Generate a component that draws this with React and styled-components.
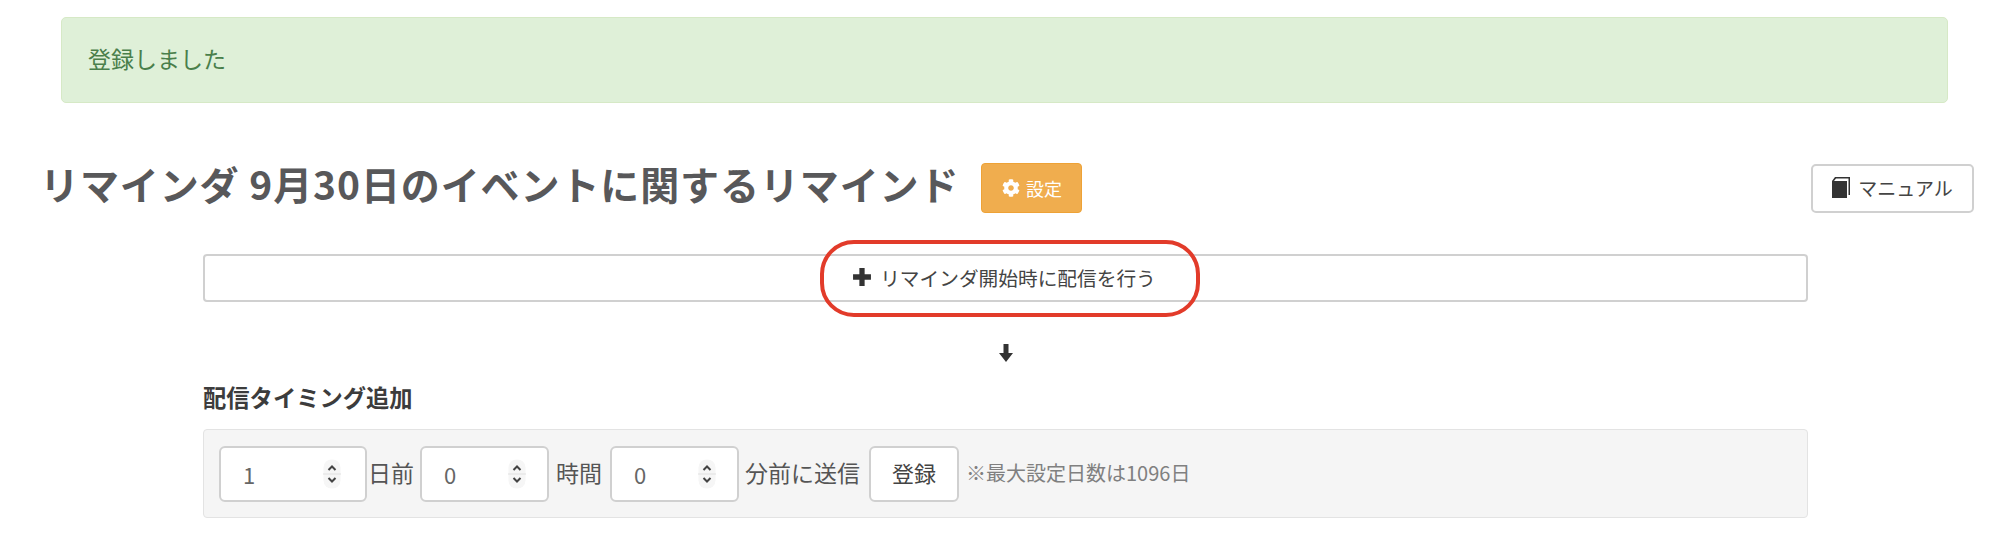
import styled, { createGlobalStyle } from 'styled-components'
import { FaCog } from 'react-icons/fa'

const GlobalStyle = createGlobalStyle`
  html, body {
    margin: 0;
    background: #fff;
  }
  body {
    font-family: "Noto Sans CJK JP", "Noto Sans", sans-serif;
    color: #333;
  }
`

const Page = styled.div`
  width: 1999px;
  height: 551px;
  overflow: hidden;
  box-sizing: border-box;
  padding: 17px 25px 0 40px;
`

const Alert = styled.div`
  box-sizing: border-box;
  height: 86px;
  margin: 0 26px 0 21px;
  padding: 0 26px 4px;
  display: flex;
  align-items: center;
  background: #dff0d8;
  border: 1px solid #d6e9c6;
  border-radius: 5px;
  color: #4a7f4b;
  font-size: 23px;
`

const TitleRow = styled.div`
  display: flex;
  align-items: center;
  height: 50px;
  margin-top: 60px;
`

const Title = styled.h1`
  margin: 0 0 10px;
  font-size: 39px;
  line-height: 50px;
  font-weight: 700;
  color: #58585a;
  white-space: nowrap;
  letter-spacing: 0.9px;
`

const SettingsButton = styled.button`
  box-sizing: border-box;
  width: 101px;
  height: 50px;
  margin-left: 22px;
  padding-bottom: 2px;
  display: flex;
  align-items: center;
  justify-content: center;
  gap: 6px;
  background: #f0ad4e;
  border: 1px solid #eea236;
  border-radius: 4px;
  color: #fff;
  font: inherit;
  font-size: 18px;
`

const ManualButton = styled.button`
  box-sizing: border-box;
  width: 163px;
  height: 49px;
  margin-left: auto;
  padding-bottom: 2px;
  display: flex;
  align-items: center;
  justify-content: center;
  gap: 7px;
  background: #fff;
  border: 2px solid #d0d0d0;
  border-radius: 5px;
  color: #444;
  font: inherit;
  font-size: 19px;
  line-height: 1;
`

const Content = styled.div`
  width: 1605px;
  margin: 41px 0 0 163px;
`

const StartRow = styled.div`
  position: relative;
`

const StartButton = styled.button`
  box-sizing: border-box;
  width: 100%;
  height: 48px;
  padding: 0 3px 2px 0;
  display: flex;
  align-items: center;
  justify-content: center;
  gap: 8px;
  background: #fff;
  border: 2px solid #d0d0d0;
  border-radius: 4px;
  color: #444;
  font: inherit;
  font-size: 19.7px;
`

const Highlight = styled.div`
  position: absolute;
  left: 617px;
  top: -14px;
  width: 380px;
  height: 77px;
  box-sizing: border-box;
  border: 4px solid #e23b2a;
  border-radius: 34px;
  pointer-events: none;
`

const ArrowRow = styled.div`
  display: flex;
  justify-content: center;
  margin-top: 41px;
  height: 20px;
  padding-left: 1px;
`

const SectionTitle = styled.h2`
  margin: 18px 0 0;
  font-size: 23.3px;
  line-height: 32px;
  font-weight: 700;
  color: #3c3c3c;
`

const Well = styled.div`
  box-sizing: border-box;
  height: 89px;
  margin-top: 16px;
  padding: 0 15px;
  display: flex;
  align-items: center;
  background: #f5f5f5;
  border: 1px solid #e3e3e3;
  border-radius: 4px;
`

const NumberField = styled.div`
  box-sizing: border-box;
  width: ${p => p.$width}px;
  height: 56px;
  flex-shrink: 0;
  display: flex;
  align-items: center;
  justify-content: space-between;
  padding: 0 ${p => p.$spinnerInset}px 0 ${p => p.$inset}px;
  background: #fff;
  border: 2px solid #d0d0d0;
  border-radius: 6px;
  font-size: 22px;
  color: #666;
`

const Unit = styled.span`
  margin: 0 ${p => p.$right}px 3px ${p => p.$left}px;
  font-size: 23px;
  color: #555;
  white-space: nowrap;
`

const SubmitButton = styled.button`
  box-sizing: border-box;
  width: 90px;
  height: 56px;
  flex-shrink: 0;
  padding: 0 0 3px;
  background: #fff;
  border: 2px solid #d0d0d0;
  border-radius: 6px;
  color: #444;
  font: inherit;
  font-size: 22px;
`

const Note = styled.span`
  margin: 0 0 3px 7px;
  font-size: 20px;
  color: #808080;
  white-space: nowrap;
`

const Spinner = () => (
  <svg width="18" height="30" viewBox="0 0 18 30" fill="none">
    <rect x="0.5" y="0.5" width="17" height="29" rx="8" fill="#f6f6f6" />
    <path d="M0 15h18" stroke="#e0e0e0" />
    <path d="M5.500 11l3.500-3.500 3.500 3.500M5.500 19l3.500 3.500 3.500-3.500" stroke="#444" strokeWidth="2" />
  </svg>
)

const PlusIcon = () => (
  <svg width="20" height="20" viewBox="0 0 19 19" fill="#333">
    <path d="M7 1h5v6h6v5h-6v6H7v-6H1V7h6z" />
  </svg>
)

const ArrowDownIcon = () => (
  <svg width="16" height="20" viewBox="0 0 16 20" fill="#333">
    <path d="M5.500 1h5v9H15l-7 9-7-9h4.500z" />
  </svg>
)

const BookIcon = () => (
  <svg width="19" height="21" viewBox="0 0 19 21">
    <path d="M0 4l3-4h15v18h-1.500V1.500H4L2 4h13v17H0z" fill="#333" />
  </svg>
)

const TimeField = ({ value, width, inset, spinnerInset }) => (
  <NumberField $width={width} $inset={inset} $spinnerInset={spinnerInset}>
    <span>{value}</span>
    <Spinner />
  </NumberField>
)

const App = () => {
  return (
    <Page>
      <GlobalStyle />
      <Alert>登録しました</Alert>
      <TitleRow>
        <Title>リマインダ 9月30日のイベントに関するリマインド</Title>
        <SettingsButton><FaCog size={18} />設定</SettingsButton>
        <ManualButton><BookIcon />マニュアル</ManualButton>
      </TitleRow>
      <Content>
        <StartRow>
          <StartButton><PlusIcon />リマインダ開始時に配信を行う</StartButton>
          <Highlight />
        </StartRow>
        <ArrowRow><ArrowDownIcon /></ArrowRow>
        <SectionTitle>配信タイミング追加</SectionTitle>
        <Well>
          <TimeField value="1" width={148} inset={22} spinnerInset={24} />
          <Unit $left={1} $right={6}>日前</Unit>
          <TimeField value="0" width={129} inset={22} spinnerInset={21} />
          <Unit $left={7} $right={8}>時間</Unit>
          <TimeField value="0" width={129} inset={22} spinnerInset={21} />
          <Unit $left={6} $right={9}>分前に送信</Unit>
          <SubmitButton>登録</SubmitButton>
          <Note>※最大設定日数は1096日</Note>
        </Well>
      </Content>
    </Page>
  )
}

export default App
